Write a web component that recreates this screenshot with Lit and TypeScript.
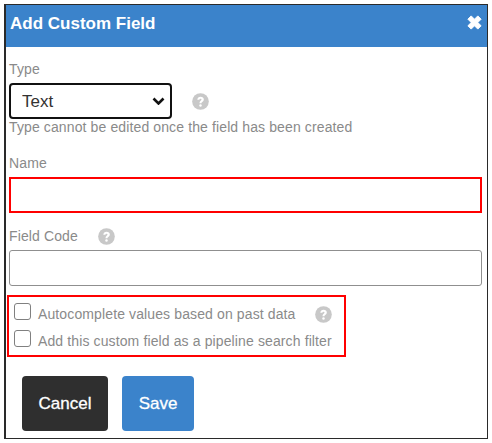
import { LitElement, html, css, svg } from "lit";
import { customElement } from "lit/decorators.js";

const help = svg`<svg class="help" viewBox="0 0 18 18" width="17" height="17" aria-hidden="true">
  <circle cx="9" cy="9" r="8.8" fill="#c8c8c8"/>
  <path d="M5.6 7.1C5.7 5.1 7.2 4 9.1 4c2 0 3.4 1.1 3.4 2.9 0 1.3-.8 1.9-1.6 2.5-.7.5-.9.8-.9 1.5H8c0-1.4.4-2 1.2-2.6.6-.5.9-.8.9-1.3 0-.6-.4-1-1.1-1-.7 0-1.1.4-1.2 1.1z" fill="#fff"/>
  <circle cx="9" cy="13.2" r="1.3" fill="#fff"/>
</svg>`;

@customElement("app-root")
export class AppRoot extends LitElement {
  static styles = css`
    :host {
      display: block;
      width: 492px;
      height: 443px;
      box-sizing: border-box;
      padding: 4px;
      background: #fff;
      font-family: "Liberation Sans", Arial, sans-serif;
      color: #8a8a8a;
    }
    .dialog {
      box-sizing: border-box;
      width: 484px;
      height: 435px;
      border: 1px solid #2a2a2a;
      border-left-width: 2px;
      display: flex;
      flex-direction: column;
      background: #fff;
    }
    .head {
      height: 42px;
      flex: none;
      box-sizing: border-box;
      background: #3b83cb;
      display: flex;
      align-items: center;
      justify-content: space-between;
      padding: 0 4px 5px 4px;
      color: #fff;
      font-weight: 700;
      font-size: 17px;
    }
    .close { width: 17px; height: 17px; margin-bottom: 3px; }
    .body {
      padding: 15px 3px 0 3px;
      display: flex;
      flex-direction: column;
    }
    label, .hint, .check span {
      font-size: 14px;
      line-height: 15px;
      letter-spacing: 0.12px;
    }
    .row { display: flex; align-items: center; }
    select {
      appearance: none;
      box-sizing: border-box;
      width: 163px;
      height: 36px;
      margin-top: 6px;
      border: 2px solid #111;
      border-radius: 4px;
      background: #fff url("data:image/svg+xml,%3Csvg xmlns='http://www.w3.org/2000/svg' width='13' height='8'%3E%3Cpath d='M1.5 1.5l5 5 5-5' fill='none' stroke='%23111' stroke-width='2.6'/%3E%3C/svg%3E") no-repeat right 5px center;
      color: #333;
      font: 17px "Liberation Sans", Arial, sans-serif;
      padding: 0 0 0 11px;
    }
    .row .help { margin: 6px 0 0 20px; }
    .hint { margin-top: 1px; }
    input[type="text"] {
      display: block;
      box-sizing: border-box;
      width: 473px;
      height: 36px;
      border-radius: 3px;
      border: 1px solid #8f8f8f;
      background: #fff;
    }
    .name-label { margin-top: 21px; }
    .name { margin-top: 6px; border: 2px solid #f00 !important; border-radius: 0 !important; }
    .code-row { margin-top: 14px; height: 18px; }
    .code-row .help { margin: 0 0 0 20px; }
    .code { margin-top: 5px; }
    .checks {
      box-sizing: border-box;
      width: 339px;
      height: 62px;
      margin: 9px 0 0 -2px;
      border: 2px solid #f00;
      padding: 5px 0 0 5px;
      display: flex;
      flex-direction: column;
      gap: 9px;
    }
    .check { display: flex; align-items: center; height: 18px; gap: 7px; }
    .check span { padding-top: 6px; }
    .box {
      box-sizing: border-box;
      width: 17px;
      height: 17px;
      flex: none;
      appearance: none;
      margin: 0;
      background: #fff;
      border: 1px solid #808080;
      border-radius: 3px;
    }
    .check .help { margin: 6px 0 0 12px; }
    .actions { display: flex; gap: 14px; margin: 19px 0 0 13px; }
    button {
      height: 55px;
      border: 0;
      border-radius: 4px;
      color: #fff;
      font: 17px "Liberation Sans", Arial, sans-serif;
      -webkit-text-stroke: 0.3px #fff;
      padding: 0;
    }
    .cancel { width: 86px; background: #2f2f2f; }
    .save { width: 72px; background: #3b83cb; }
  `;

  render() {
    return html`
      <div class="dialog">
        <div class="head">
          <span>Add Custom Field</span>
          <svg class="close" viewBox="0 0 18 18" aria-label="Close">
            <path d="M2 5.5L5.5 2 9 5.5 12.5 2 16 5.5 12.5 9 16 12.5 12.5 16 9 12.5 5.5 16 2 12.5 5.5 9z" fill="#fff" stroke="#fff" stroke-linejoin="round"/>
          </svg>
        </div>
        <div class="body">
          <label>Type</label>
          <div class="row">
            <select><option>Text</option></select>
            ${help}
          </div>
          <div class="hint">Type cannot be edited once the field has been created</div>
          <label class="name-label">Name</label>
          <input class="name" type="text" />
          <div class="row code-row"><label>Field Code</label>${help}</div>
          <input class="code" type="text" />
          <div class="checks">
            <div class="check"><input class="box" type="checkbox" /><span>Autocomplete values based on past data</span>${help}</div>
            <div class="check"><input class="box" type="checkbox" /><span>Add this custom field as a pipeline search filter</span></div>
          </div>
          <div class="actions">
            <button class="cancel">Cancel</button>
            <button class="save">Save</button>
          </div>
        </div>
      </div>
    `;
  }
}
